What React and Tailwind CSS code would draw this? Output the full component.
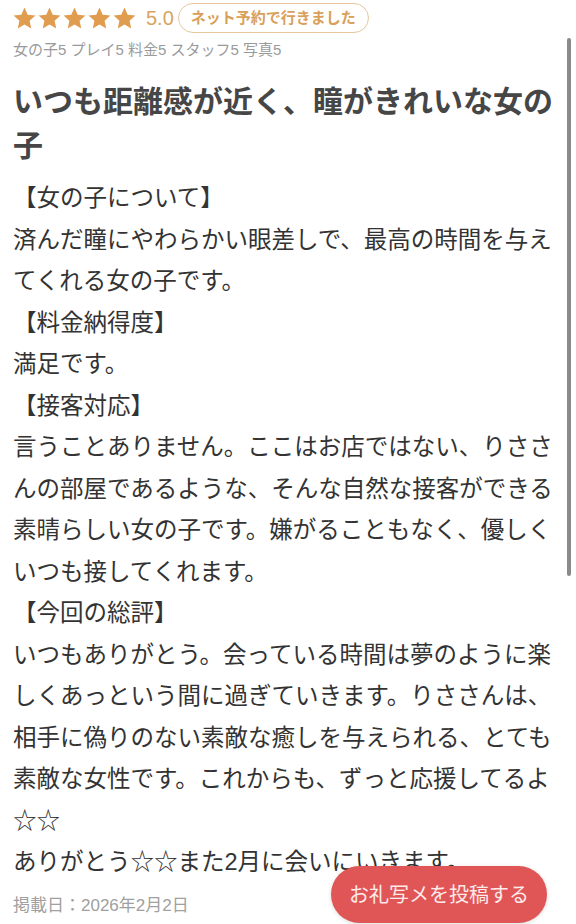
import React from 'react';

const FONT = '"Liberation Sans", "Noto Sans CJK JP", sans-serif';

function Star() {
  return (
    <svg viewBox="0 0 24 24" className="w-[25px] h-[25px]" fill="#e09d50">
      <polygon points="12,1.5 15.1,8.3 22.5,9.1 16.9,14.1 18.5,21.5 12,17.7 5.5,21.5 7.1,14.1 1.5,9.1 8.9,8.3" />
    </svg>
  );
}

const body = [
  '【女の子について】',
  '済んだ瞳にやわらかい眼差しで、最高の時間を与えてくれる女の子です。',
  '【料金納得度】',
  '満足です。',
  '【接客対応】',
  '言うことありません。ここはお店ではない、りささんの部屋であるような、そんな自然な接客ができる素晴らしい女の子です。嫌がることもなく、優しくいつも接してくれます。',
  '【今回の総評】',
  'いつもありがとう。会っている時間は夢のように楽しくあっという間に過ぎていきます。りささんは、相手に偽りのない素敵な癒しを与えられる、とても素敵な女性です。これからも、ずっと応援してるよ☆☆',
  'ありがとう☆☆また2月に会いにいきます。',
];

export default function App() {
  return (
    <div
      className="relative w-[576px] h-[924px] overflow-hidden bg-white px-[12px]"
      style={{ fontFamily: FONT }}
    >
      {/* rating row */}
      <div className="flex items-center mt-[3px] h-[30px]">
        <div className="flex items-center">
          <Star />
          <Star />
          <Star />
          <Star />
          <Star />
        </div>
        <span className="ml-[9px] text-[20px] text-[#d9a35f] leading-none">5.0</span>
        <span className="ml-[4px] h-[30px] px-[12px] flex items-center rounded-full border-[1.5px] border-[#e6c79d] text-[15px] font-bold text-[#d9a05a]">
          ネット予約で行きました
        </span>
      </div>

      <div className="mt-[7px] ml-[1px] text-[15px] leading-[20px] text-[#9a9a9a]">
        女の子5 プレイ5 料金5 スタッフ5 写真5
      </div>

      <h1 className="mt-[20px] ml-[1px] text-[30px] leading-[44px] font-bold text-[#464646]">
        いつも距離感が近く、瞳がきれいな女の子
      </h1>

      <div className="mt-[10px] ml-[1px] text-[23.5px] leading-[41.5px] text-[#333]">
        {body.map((t, i) => (
          <p key={i}>{t}</p>
        ))}
      </div>

      <div className="mt-[10px] ml-[1px] text-[17px] leading-[24px] text-[#a0a0a0]">
        掲載日：2026年2月2日
      </div>

      {/* floating post button */}
      <button className="absolute left-[331px] top-[866px] w-[216px] h-[57px] rounded-full bg-[#e05656] text-[20px] text-[#fdeaea] flex items-center justify-center shadow-[0_1px_4px_rgba(0,0,0,0.15)]">
        お礼写メを投稿する
      </button>

      {/* scroll indicator */}
      <div className="absolute left-[567px] top-[38px] w-[4px] h-[538px] rounded-full bg-[#8a8a8a]" />
    </div>
  );
}
